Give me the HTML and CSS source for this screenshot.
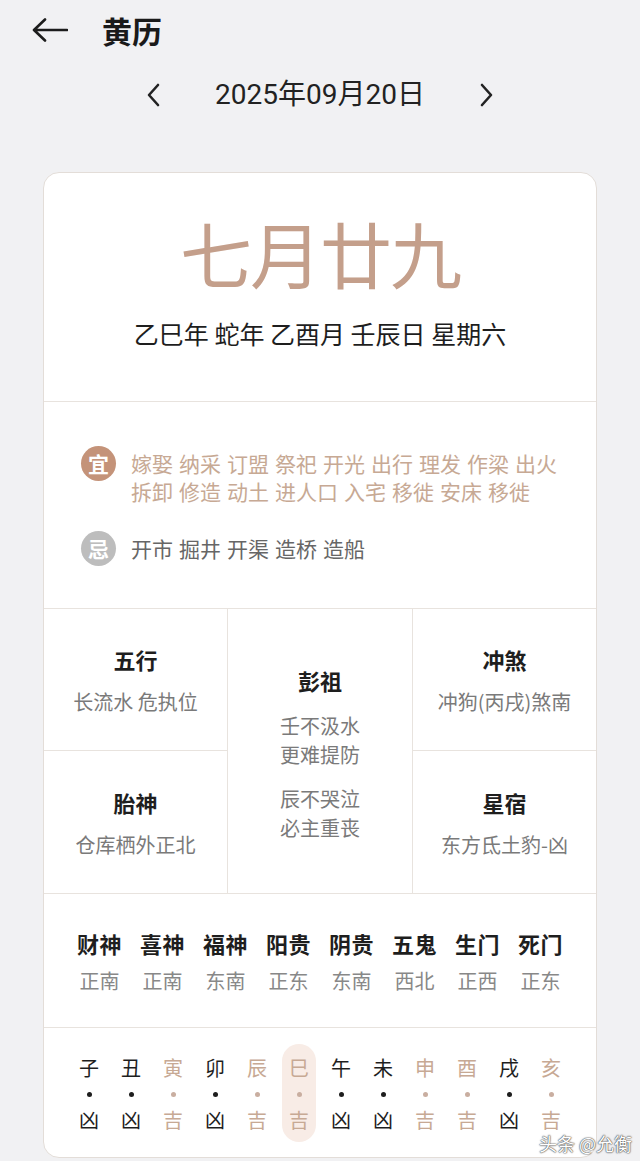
FILE: index.html
```html
<!DOCTYPE html>
<html lang="zh-CN">
<head>
<meta charset="utf-8">
<title>黄历</title>
<link rel="stylesheet" href="styles.css">
</head>
<body>
<div class="page">
  <header class="topbar">
    <svg class="back" viewBox="0 0 36 24" width="36" height="24" aria-hidden="true">
      <path d="M35 12H2.5M13 1.5L2 12l11 10.5" fill="none" stroke="#1c1c1c" stroke-width="2.6" stroke-linecap="round" stroke-linejoin="round"/>
    </svg>
    <h1 class="title">黄历</h1>
  </header>

  <div class="datebar">
    <svg class="chev" viewBox="0 0 14 24" width="14" height="24" aria-hidden="true">
      <path d="M12 2L3 12l9 10" fill="none" stroke="#222" stroke-width="2.6" stroke-linecap="round" stroke-linejoin="round"/>
    </svg>
    <div class="date">2025年09月20日</div>
    <svg class="chev" viewBox="0 0 14 24" width="14" height="24" aria-hidden="true">
      <path d="M2 2l9 10-9 10" fill="none" stroke="#222" stroke-width="2.6" stroke-linecap="round" stroke-linejoin="round"/>
    </svg>
  </div>

  <main class="card">
    <section class="lunar">
      <div class="lunar-day">七月廿九</div>
      <div class="ganzhi">乙巳年 蛇年 乙酉月 壬辰日 星期六</div>
    </section>

    <section class="yiji">
      <div class="yj-row">
        <span class="badge badge-yi">宜</span>
        <div class="yj-items yi">
          <span>嫁娶</span><span>纳采</span><span>订盟</span><span>祭祀</span><span>开光</span><span>出行</span><span>理发</span><span>作梁</span><span>出火</span>
          <span>拆卸</span><span>修造</span><span>动土</span><span>进人口</span><span>入宅</span><span>移徙</span><span>安床</span><span>移徙</span>
        </div>
      </div>
      <div class="yj-row">
        <span class="badge badge-ji">忌</span>
        <div class="yj-items ji">
          <span>开市</span><span>掘井</span><span>开渠</span><span>造桥</span><span>造船</span>
        </div>
      </div>
    </section>

    <section class="grid">
      <div class="cell c-wuxing">
        <div class="cell-title">五行</div>
        <div class="cell-val">长流水 危执位</div>
      </div>
      <div class="cell c-pengzu">
        <div class="cell-title pz-title">彭祖</div>
        <div class="pz-group"><div>壬不汲水</div><div>更难提防</div></div>
        <div class="pz-group"><div>辰不哭泣</div><div>必主重丧</div></div>
      </div>
      <div class="cell c-chongsha">
        <div class="cell-title">冲煞</div>
        <div class="cell-val">冲狗(丙戌)煞南</div>
      </div>
      <div class="cell c-taishen">
        <div class="cell-title">胎神</div>
        <div class="cell-val">仓库栖外正北</div>
      </div>
      <div class="cell c-xingxiu">
        <div class="cell-title">星宿</div>
        <div class="cell-val">东方氐土豹-凶</div>
      </div>
    </section>

    <section class="gods">
      <div class="god"><div class="god-name">财神</div><div class="god-dir">正南</div></div>
      <div class="god"><div class="god-name">喜神</div><div class="god-dir">正南</div></div>
      <div class="god"><div class="god-name">福神</div><div class="god-dir">东南</div></div>
      <div class="god"><div class="god-name">阳贵</div><div class="god-dir">正东</div></div>
      <div class="god"><div class="god-name">阴贵</div><div class="god-dir">东南</div></div>
      <div class="god"><div class="god-name">五鬼</div><div class="god-dir">西北</div></div>
      <div class="god"><div class="god-name">生门</div><div class="god-dir">正西</div></div>
      <div class="god"><div class="god-name">死门</div><div class="god-dir">正东</div></div>
    </section>

    <section class="hours">
      <div class="hour bad"><span class="h-zhi">子</span><span class="h-dot"></span><span class="h-jx">凶</span></div>
      <div class="hour bad"><span class="h-zhi">丑</span><span class="h-dot"></span><span class="h-jx">凶</span></div>
      <div class="hour good"><span class="h-zhi">寅</span><span class="h-dot"></span><span class="h-jx">吉</span></div>
      <div class="hour bad"><span class="h-zhi">卯</span><span class="h-dot"></span><span class="h-jx">凶</span></div>
      <div class="hour good"><span class="h-zhi">辰</span><span class="h-dot"></span><span class="h-jx">吉</span></div>
      <div class="hour good current"><span class="h-zhi">巳</span><span class="h-dot"></span><span class="h-jx">吉</span></div>
      <div class="hour bad"><span class="h-zhi">午</span><span class="h-dot"></span><span class="h-jx">凶</span></div>
      <div class="hour bad"><span class="h-zhi">未</span><span class="h-dot"></span><span class="h-jx">凶</span></div>
      <div class="hour good"><span class="h-zhi">申</span><span class="h-dot"></span><span class="h-jx">吉</span></div>
      <div class="hour good"><span class="h-zhi">酉</span><span class="h-dot"></span><span class="h-jx">吉</span></div>
      <div class="hour bad"><span class="h-zhi">戌</span><span class="h-dot"></span><span class="h-jx">凶</span></div>
      <div class="hour good"><span class="h-zhi">亥</span><span class="h-dot"></span><span class="h-jx">吉</span></div>
    </section>
  </main>

  <div class="watermark">头条 @允衡</div>
</div>
</body>
</html>
```

FILE: styles.css
```css
* { box-sizing: border-box; }

html, body {
  margin: 0;
  padding: 0;
  background: #f1f1f3;
}

body {
  font-family: "Noto Sans CJK SC", "Noto Sans", sans-serif;
  color: #1f1f1f;
}

.page {
  position: relative;
  width: 640px;
  height: 1161px;
  overflow: hidden;
}

/* top bar */
.topbar {
  display: flex;
  align-items: center;
  height: 60px;
  padding-left: 32px;
}

.back {
  display: block;
  flex: none;
}

.title {
  margin: 0 0 0 34px;
  font-size: 30px;
  font-weight: 700;
  line-height: 1;
  color: #1a1a1a;
}

/* date bar */
.datebar {
  display: flex;
  align-items: center;
  justify-content: center;
  height: 42px;
  margin-top: 14px;
}

.datebar .chev {
  display: block;
  flex: none;
}

.date {
  width: 320px;
  text-align: center;
  font-family: "Roboto", "Noto Sans CJK SC", sans-serif;
  font-size: 28px;
  line-height: 42px;
  color: #222;
}

/* card */
.card {
  margin: 56px 43px 0;
  background: #fff;
  border: 1.5px solid #e3ddd8;
  border-radius: 16px;
  overflow: hidden;
}

.card > section + section {
  border-top: 1.5px solid #e8e3de;
}

/* lunar */
.lunar {
  height: 228px;
  display: flex;
  flex-direction: column;
  align-items: center;
  padding-top: 36px;
}

.lunar-day {
  font-size: 72px;
  line-height: 86px;
  letter-spacing: -2px;
  color: #c49f8b;
  font-weight: 400;
}

.ganzhi {
  margin-top: 22px;
  font-size: 25px;
  line-height: 32px;
  color: #1e1e1e;
}

/* yi ji */
.yiji {
  padding: 47px 30px 42px 37px;
  display: flex;
  flex-direction: column;
  gap: 29px;
}

.yj-row {
  display: flex;
  align-items: flex-start;
  gap: 15px;
}

.badge {
  flex: none;
  width: 35px;
  height: 35px;
  margin-top: -3px;
  border-radius: 50%;
  display: flex;
  align-items: center;
  justify-content: center;
  color: #fff;
  font-size: 21px;
  font-weight: 700;
  line-height: 1;
}

.badge-yi { background: #c49379; }
.badge-ji { background: #bdbdbd; }

.yj-items {
  display: flex;
  flex-wrap: wrap;
  column-gap: 6px;
  max-width: 432px;
  font-size: 21px;
  line-height: 28px;
}

.yj-items.yi { color: #c7a994; }
.yj-items.ji { color: #666; }

/* grid */
.grid {
  display: grid;
  grid-template-columns: 1fr 1fr 1fr;
  grid-template-rows: 142px 142px;
}

.cell {
  display: flex;
  flex-direction: column;
  align-items: center;
  justify-content: center;
  padding-top: 2px;
}

.c-wuxing { grid-column: 1; grid-row: 1; border-right: 1.5px solid #e8e3de; border-bottom: 1.5px solid #e8e3de; }
.c-taishen { grid-column: 1; grid-row: 2; border-right: 1.5px solid #e8e3de; }
.c-pengzu { grid-column: 2; grid-row: 1 / span 2; padding-top: 4px; }
.c-chongsha { grid-column: 3; grid-row: 1; border-left: 1.5px solid #e8e3de; border-bottom: 1.5px solid #e8e3de; }
.c-xingxiu { grid-column: 3; grid-row: 2; border-left: 1.5px solid #e8e3de; }

.cell-title {
  font-size: 22px;
  line-height: 30px;
  font-weight: 700;
  color: #1e1e1e;
}

.cell-val {
  margin-top: 13px;
  font-size: 20px;
  line-height: 30px;
  color: #7a7a7a;
}

.pz-title { margin-bottom: 16px; }

.pz-group {
  font-size: 20px;
  line-height: 29px;
  color: #7a7a7a;
  text-align: center;
}

.pz-group + .pz-group { margin-top: 15px; }

/* gods */
.gods {
  height: 134px;
  display: grid;
  grid-template-columns: repeat(8, 1fr);
  padding: 34px 24px 0 24px;
}

.god {
  display: flex;
  flex-direction: column;
  align-items: center;
}

.god-name {
  font-size: 22px;
  line-height: 30px;
  font-weight: 700;
  color: #1e1e1e;
  letter-spacing: 0.5px;
}

.god-dir {
  margin-top: 8px;
  font-size: 20px;
  line-height: 30px;
  color: #888;
}

/* hours */
.hours {
  display: grid;
  grid-template-columns: repeat(12, 1fr);
  padding: 16px 24px 15px;
}

.hour {
  justify-self: center;
  width: 34px;
  height: 98px;
  border-radius: 17px;
  display: flex;
  flex-direction: column;
  align-items: center;
  padding-top: 10px;
}

.hour.current { background: #f8ece6; }

.h-zhi {
  font-size: 20px;
  line-height: 28px;
}

.h-dot {
  width: 5px;
  height: 5px;
  border-radius: 50%;
  margin-top: 10px;
  margin-bottom: 14px;
}

.h-jx {
  font-size: 20px;
  line-height: 18px;
}

.hour.bad .h-zhi, .hour.bad .h-jx { color: #1e1e1e; }
.hour.bad .h-dot { background: #1e1e1e; }
.hour.good .h-zhi, .hour.good .h-jx { color: #c7a994; }
.hour.good .h-dot { background: #c9aea0; }

/* watermark overlay */
.watermark {
  position: absolute;
  right: 8px;
  bottom: 9px;
  font-size: 18px;
  line-height: 18px;
  color: #fff;
  text-shadow: 0 0 1px #555, 0 0 1px #555, 0 0 2px #666;
}
```
